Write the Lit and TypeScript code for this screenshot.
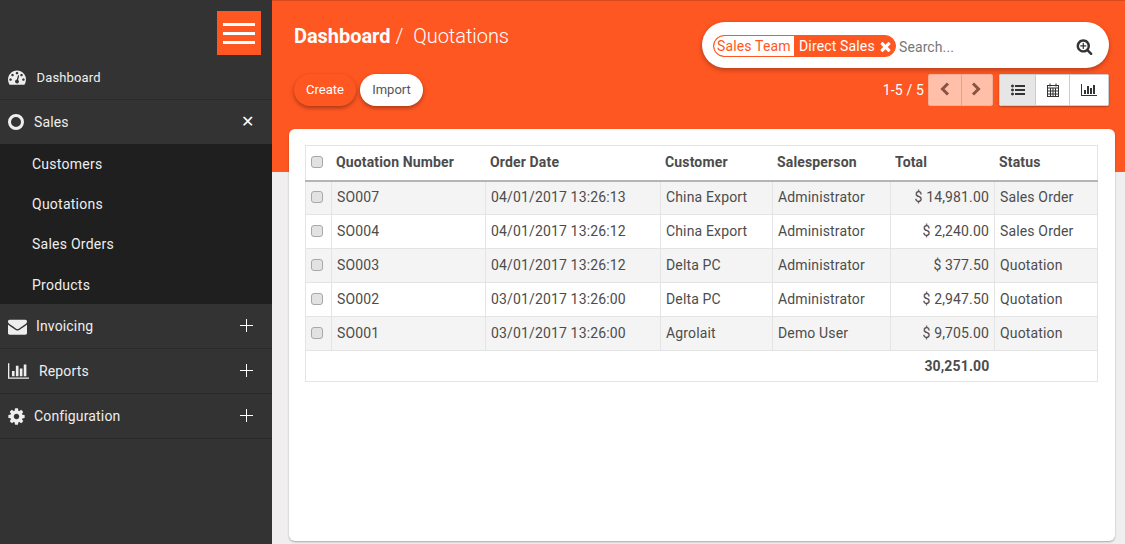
import { LitElement, html, css, svg } from 'lit';
import { customElement } from 'lit/decorators.js';

const ICONS = {
  dashboard: svg`<path d="M384 1152q0-53-37.5-90.5t-90.5-37.5-90.5 37.5-37.5 90.5 37.5 90.5 90.5 37.5 90.5-37.5 37.5-90.5zm192-448q0-53-37.5-90.5t-90.5-37.5-90.5 37.5-37.5 90.5 37.5 90.5 90.5 37.5 90.5-37.5 37.5-90.5zm428 481l101-382q6-26-7.5-48.5t-38.5-29.5-48 6.5-30 39.5l-101 382q-60 5-107 43.5t-63 98.5q-20 77 20 146t117 89 146-20 89-117q16-60-6-117t-72-91zm660-33q0-53-37.5-90.5t-90.5-37.5-90.5 37.5-37.5 90.5 37.5 90.5 90.5 37.5 90.5-37.5 37.5-90.5zm-640-640q0-53-37.5-90.5t-90.5-37.5-90.5 37.5-37.5 90.5 37.5 90.5 90.5 37.5 90.5-37.5 37.5-90.5zm448 192q0-53-37.5-90.5t-90.5-37.5-90.5 37.5-37.5 90.5 37.5 90.5 90.5 37.5 90.5-37.5 37.5-90.5zm320 448q0 261-141 483-19 29-54 29h-1402q-35 0-54-29-141-221-141-483 0-182 71-348t191-286 286-191 348-71 348 71 286 191 191 286 71 348z"/>`,
  envelope: svg`<path d="M1792 710v794q0 66-47 113t-113 47h-1472q-66 0-113-47t-47-113v-794q44 49 101 87 362 246 497 345 57 42 92.5 65.5t94.5 48 110 24.5h2q51 0 110-24.5t94.5-48 92.5-65.5q170-123 498-345 57-39 100-87zm0-294q0 79-49 151t-122 123q-376 261-468 325-10 7-42.5 30.5t-54 38-52 32.5-57.5 27-50 9h-2q-23 0-50-9t-57.5-27-52-32.5-54-38-42.5-30.5q-91-64-262-182.5t-205-142.5q-62-42-117-115.5t-55-136.5q0-78 41.5-130t118.5-52h1472q65 0 112.5 46t47.5 114z"/>`,
  chart: svg`<path d="M640 896v512h-256v-512h256zm384-512v1024h-256v-1024h256zm1024 1152v128h-2048v-1536h128v1408h1920zm-640-896v768h-256v-768h256zm384-384v1152h-256v-1152h256z"/>`,
  cog: svg`<path d="M1152 896q0-106-75-181t-181-75-181 75-75 181 75 181 181 75 181-75 75-181zm512-109v222q0 12-8 23t-20 13l-185 28q-19 54-39 91 35 50 107 138 10 12 10 25t-9 23q-27 37-99 108t-94 71q-12 0-26-9l-138-108q-44 23-91 38-16 136-29 186-7 28-36 28h-222q-14 0-24.5-8.5t-11.5-21.5l-28-184q-49-16-90-37l-141 107q-10 9-25 9-14 0-25-11-126-114-165-168-7-10-7-23 0-12 8-23 15-21 51-66.5t54-70.5q-27-50-41-99l-183-27q-13-2-21-12.5t-8-23.5v-222q0-12 8-23t19-13l186-28q14-46 39-92-40-57-107-138-10-12-10-24 0-10 9-23 26-36 98.5-107.5t94.5-71.5q13 0 26 10l138 107q44-23 91-38 16-136 29-186 7-28 36-28h222q14 0 24.5 8.5t11.5 21.5l28 184q49 16 90 37l142-107q9-9 24-9 13 0 25 10 129 119 165 170 7 8 7 22 0 12-8 23-15 21-51 66.5t-54 70.5q26 50 41 98l183 28q13 2 21 12.5t8 23.5z"/>`,
  search: svg`<path d="M1088 800v64q0 13-9.5 22.5t-22.5 9.5h-224v224q0 13-9.5 22.5t-22.5 9.5h-64q-13 0-22.5-9.5t-9.5-22.5v-224h-224q-13 0-22.5-9.5t-9.5-22.5v-64q0-13 9.5-22.5t22.5-9.5h224v-224q0-13 9.5-22.5t22.5-9.5h64q13 0 22.5 9.5t9.5 22.5v224h224q13 0 22.5 9.5t9.5 22.5zm128 32q0-185-131.5-316.5t-316.5-131.5-316.5 131.5-131.5 316.5 131.5 316.5 316.5 131.5 316.5-131.5 131.5-316.5zm512 832q0 53-37.5 90.5t-90.5 37.5q-54 0-90-38l-343-342q-179 124-399 124-143 0-273.5-55.5t-225-150-150-225-55.5-273.5 55.5-273.5 150-225 225-150 273.5-55.5 273.5 55.5 225 150 150 225 55.5 273.5q0 220-124 399l343 343q37 37 37 90z"/>`,
  list: svg`<path d="M384 1408q0 80-56 136t-136 56-136-56-56-136 56-136 136-56 136 56 56 136zm0-512q0 80-56 136t-136 56-136-56-56-136 56-136 136-56 136 56 56 136zm1408 416v192q0 13-9.5 22.5t-22.5 9.5h-1216q-13 0-22.5-9.5t-9.5-22.5v-192q0-13 9.5-22.5t22.5-9.5h1216q13 0 22.5 9.5t9.5 22.5zm-1408-928q0 80-56 136t-136 56-136-56-56-136 56-136 136-56 136 56 56 136zm1408 416v192q0 13-9.5 22.5t-22.5 9.5h-1216q-13 0-22.5-9.5t-9.5-22.5v-192q0-13 9.5-22.5t22.5-9.5h1216q13 0 22.5 9.5t9.5 22.5zm0-512v192q0 13-9.5 22.5t-22.5 9.5h-1216q-13 0-22.5-9.5t-9.5-22.5v-192q0-13 9.5-22.5t22.5-9.5h1216q13 0 22.5 9.5t9.5 22.5z"/>`,
  times: svg`<path d="M1490 1322q0 40-28 68l-136 136q-28 28-68 28t-68-28l-294-294-294 294q-28 28-68 28t-68-28l-136-136q-28-28-28-68t28-68l294-294-294-294q-28-28-28-68t28-68l136-136q28-28 68-28t68 28l294 294 294-294q28-28 68-28t68 28l136 136q28 28 28 68t-28 68l-294 294 294 294q28 28 28 68z"/>`,
};

const icon = (name: keyof typeof ICONS, width: number, height: number, vb = '0 0 1792 1792') => html`
  <svg class="icon" width=${width} height=${height} viewBox=${vb} fill="currentColor" preserveAspectRatio="none">${ICONS[name]}</svg>
`;

const ROWS = [
  ['SO007', '04/01/2017 13:26:13', 'China Export', 'Administrator', '$ 14,981.00', 'Sales Order'],
  ['SO004', '04/01/2017 13:26:12', 'China Export', 'Administrator', '$ 2,240.00', 'Sales Order'],
  ['SO003', '04/01/2017 13:26:12', 'Delta PC', 'Administrator', '$ 377.50', 'Quotation'],
  ['SO002', '03/01/2017 13:26:00', 'Delta PC', 'Administrator', '$ 2,947.50', 'Quotation'],
  ['SO001', '03/01/2017 13:26:00', 'Agrolait', 'Demo User', '$ 9,705.00', 'Quotation'],
];

@customElement('app-root')
export class AppRoot extends LitElement {
  static styles = css`
    :host {
      display: flex;
      height: 544px;
      overflow: hidden;
      font-family: Roboto, "Liberation Sans", sans-serif;
      font-size: 14px;
      color: #4c4c4c;
      background: #f0eeee;
    }
    .icon { display: block; flex: none; }

    .sidebar { width: 272px; flex: none; background: #333; color: #eee; letter-spacing: .15px; }
    .burger-row { display: flex; justify-content: flex-end; padding: 11px 11px 0 0; height: 55px; box-sizing: border-box; }
    .burger {
      width: 44px; height: 44px; background: #ff5722; box-sizing: border-box;
      display: flex; flex-direction: column; justify-content: center; gap: 6px; padding: 0 6px;
    }
    .burger span { display: block; height: 3px; background: #fff; }
    .item {
      display: flex; align-items: center; height: 45px; box-sizing: border-box;
      padding: 0 18px 0 8px; border-bottom: 1px solid #2a2a2a;
    }
    .item .label { flex: 1; }
    .item.first { font-size: 13px; }
    .item.open { border-bottom: 0; height: 44px; }
    .sign { width: 14px; height: 14px; position: relative; }
    .sign::before, .sign::after { content: ""; position: absolute; background: #fff; }
    .sign::before { left: 6px; top: 0; width: 1px; height: 13px; }
    .sign::after { left: 0; top: 6px; width: 13px; height: 1px; }
    .close-x { font-size: 16px; color: #fff; line-height: 14px; width: 14px; text-align: center; margin-right: -1px; }
    .ring { width: 10px; height: 10px; border: 3px solid #eee; border-radius: 50%; margin-right: 10px; }
    .sub { background: #1f1f1f; padding: 0 0 0 32px; height: 160px; letter-spacing: .25px; }
    .sub div { height: 40px; line-height: 40px; }
    .sub div:last-child { line-height: 42px; }

    .main { flex: 1; min-width: 0; display: flex; flex-direction: column; }
    .head {
      height: 172px; flex: none; box-sizing: border-box; background: #ff5722; color: #fff;
      border-top: 1px solid #d9491c; padding: 21px 16px 0 22px;
      display: flex; justify-content: space-between;
    }
    .title { font-size: 20px; font-weight: 300; line-height: 28px; display: flex; letter-spacing: -.05px; }
    .title b { font-weight: 700; }
    .title .sep { margin: 0 10px 0 5px; }
    .actions { display: flex; gap: 4px; margin-top: 24px; }
    .btn {
      width: 62px; height: 32px; box-sizing: border-box; border-radius: 16px; font-size: 13px; padding-bottom: 2px;
      display: flex; align-items: center; justify-content: center; background: #ff5722; color: #fff;
      box-shadow: 0 2px 4px rgba(0,0,0,.35);
    }
    .btn.alt { width: 63px; background: #fff; color: #555; }
    .right { width: 407px; display: flex; flex-direction: column; }
    .search {
      height: 46px; box-sizing: border-box; background: #fff; border-radius: 23px;
      box-shadow: 0 2px 5px rgba(0,0,0,.3); padding: 2px 16px 0 11px;
      display: flex; align-items: center;
    }
    .chip {
      display: flex; height: 22px; box-sizing: border-box; border: 1px solid #ff5722; border-radius: 11px;
      overflow: hidden; background: #ff5722; color: #fff; line-height: 20px; width: 183px; letter-spacing: .15px;
    }
    .chip .facet { background: #fff; color: #ff5722; padding: 0 3px; width: 74px; flex: none; border-radius: 10px 0 0 10px; }
    .chip .val { padding: 0 0 0 5px; flex: none; }
    .chip .icon { margin: 3px 0 0 3px; color: #fff; }
    .placeholder { flex: 1; margin-left: 3px; padding-top: 2px; color: #777; letter-spacing: .1px; }
    .search > .icon { color: #333; margin-top: 1px; }
    .pager { display: flex; justify-content: flex-end; align-items: center; margin-top: 6px; height: 32px; }
    .count { font-size: 14px; margin-right: 4px; letter-spacing: .15px; }
    .group { display: flex; height: 32px; border-radius: 3px; overflow: hidden; }
    .nav { background: #ffbfa9; box-shadow: inset 0 0 0 1px #f4ad96; color: #8a5444; margin-right: 6px; }
    .nav div { width: 33px; display: flex; align-items: center; justify-content: center; padding-bottom: 2px; box-sizing: border-box; }
    .nav div + div { width: 32px; border-left: 1px solid #e6a28b; padding-right: 3px; }
    .view { box-shadow: 0 1px 2px rgba(0,0,0,.3); background: #fff; color: #333; }
    .view div { display: flex; align-items: center; justify-content: center; border: 1px solid #ccc; border-left: 0; box-sizing: border-box; padding-bottom: 1px; }
    .view div:first-child { width: 37px; background: #e6e6e6; border-left: 1px solid #ccc; }
    .view div:nth-child(2) { width: 34px; }
    .view div:nth-child(3) { width: 39px; }

    .card {
      position: relative; flex: 1; margin: -43px 10px 3px 17px; padding: 16px; background: #fff;
      border-radius: 6px; box-shadow: 0 1px 2px rgba(0,0,0,.3);
    }
    table { border-collapse: collapse; table-layout: fixed; width: 793px; letter-spacing: .15px; }
    th, td { border: 1px solid #e4e4e4; padding: 0 5px; box-sizing: border-box; text-align: left; white-space: nowrap; }
    thead th { height: 35px; font-weight: 700; border-width: 1px 0 2px; border-bottom-color: #b5b5b5; padding: 0 0 2px 4.5px; letter-spacing: .15px; }
    thead th:first-child { border-left-width: 1px; }
    thead th:last-child { border-right-width: 1px; }
    tbody td { height: 34px; padding-bottom: 2px; }
    tbody tr:nth-child(odd) { background: #f4f4f4; }
    tfoot td { height: 31px; font-weight: 700; border-left: 0; border-right: 0; }
    tfoot td:first-child { border-left: 1px solid #e4e4e4; }
    tfoot td:last-child { border-right: 1px solid #e4e4e4; }
    .num { text-align: right; }
    thead th.check, tbody td.check { padding: 0 0 2px 5px; }
    .box {
      display: block; width: 12px; height: 12px; margin: 0; appearance: none; box-sizing: border-box;
      border: 1px solid #a8a8a8; border-radius: 3px; background: #e2e2e2;
    }
  `;

  menuItem(name: string, ic: unknown, gap: number) {
    return html`
      <div class="item">
        ${ic}
        <span class="label" style="margin-left:${gap}px">${name}</span>
        <span class="sign"></span>
      </div>
    `;
  }

  render() {
    return html`
      <aside class="sidebar">
        <div class="burger-row"><div class="burger"><span></span><span></span><span></span></div></div>
        <div class="item first">
          ${icon('dashboard', 18, 18)}
          <span class="label" style="margin-left:10.5px">Dashboard</span>
        </div>
        <div class="item open">
          <span class="ring"></span>
          <span class="label">Sales</span>
          <span class="close-x">✕</span>
        </div>
        <div class="sub">
          <div>Customers</div>
          <div>Quotations</div>
          <div>Sales Orders</div>
          <div>Products</div>
        </div>
        ${this.menuItem('Invoicing', icon('envelope', 19, 19), 9)}
        ${this.menuItem('Reports', icon('chart', 21, 18, '0 0 2048 1792'), 10)}
        ${this.menuItem('Configuration', html`<span style="margin-left:-1.5px">${icon('cog', 19, 19)}</span>`, 8.5)}
      </aside>
      <div class="main">
        <header class="head">
          <div>
            <div class="title"><b>Dashboard</b><span class="sep">/</span><span>Quotations</span></div>
            <div class="actions">
              <div class="btn">Create</div>
              <div class="btn alt">Import</div>
            </div>
          </div>
          <div class="right">
            <div class="search">
              <div class="chip">
                <span class="facet">Sales Team</span>
                <span class="val">Direct Sales</span>
                ${icon('times', 15, 15)}
              </div>
              <span class="placeholder">Search...</span>
              ${icon('search', 17, 17)}
            </div>
            <div class="pager">
              <span class="count">1-5 / 5</span>
              <div class="group nav">
                <div><svg width="10" height="14" viewBox="0 0 10 14" fill="none" stroke="currentColor" stroke-width="3"><path d="M8 1.500 2.500 7 8 12.500"/></svg></div>
                <div><svg width="10" height="14" viewBox="0 0 10 14" fill="none" stroke="currentColor" stroke-width="3"><path d="M2 1.500 7.500 7 2 12.500"/></svg></div>
              </div>
              <div class="group view">
                <div>${icon('list', 14, 14)}</div>
                <div><svg width="12" height="14" viewBox="0 0 12 14" fill="none" stroke="currentColor"><rect x=".5" y="2.500" width="11" height="11"/><path d="M.5 5h11M.5 8h11M.5 11h11M3.500 5v8M6 5v8M8.500 5v8M3 .5v3M9 .5v3"/></svg></div>
                <div>${icon('chart', 16, 14, '0 0 2048 1792')}</div>
              </div>
            </div>
          </div>
        </header>
        <section class="card">
          <table>
            <colgroup>
              <col style="width:26px" /><col style="width:154px" /><col style="width:175px" /><col style="width:112px" />
              <col style="width:118px" /><col style="width:104px" /><col />
            </colgroup>
            <thead>
              <tr>
                <th class="check"><input class="box" type="checkbox" /></th>
                <th>Quotation Number</th><th>Order Date</th><th>Customer</th><th>Salesperson</th><th>Total</th><th>Status</th>
              </tr>
            </thead>
            <tbody>
              ${ROWS.map((r) => html`
                <tr>
                  <td class="check"><input class="box" type="checkbox" /></td>
                  <td>${r[0]}</td><td>${r[1]}</td><td>${r[2]}</td><td>${r[3]}</td>
                  <td class="num">${r[4]}</td><td>${r[5]}</td>
                </tr>
              `)}
            </tbody>
            <tfoot>
              <tr><td colspan="5"></td><td class="num">30,251.00</td><td></td></tr>
            </tfoot>
          </table>
        </section>
      </div>
    `;
  }
}
